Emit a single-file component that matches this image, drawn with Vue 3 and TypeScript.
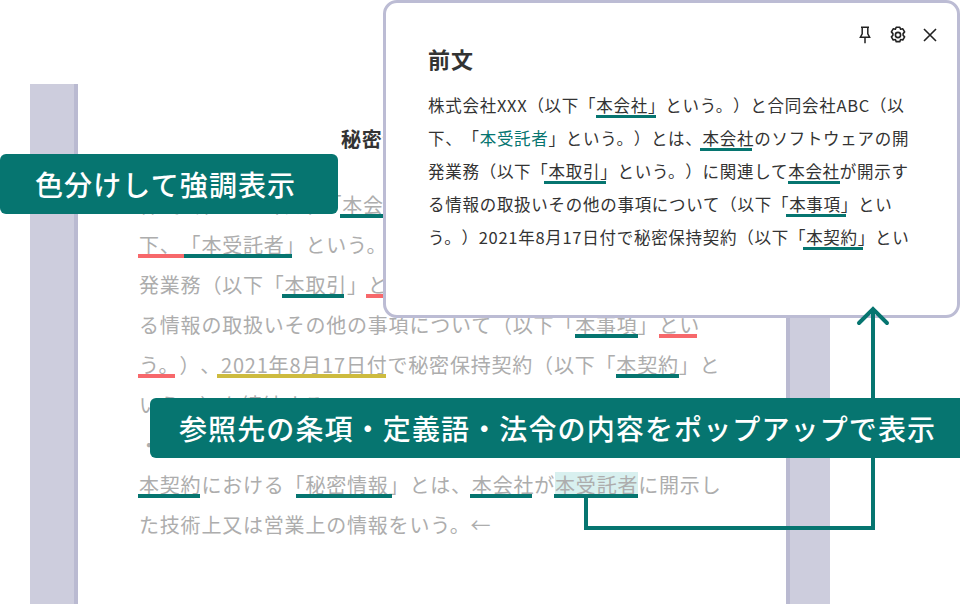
<script setup lang="ts">
type Tone = 'teal' | 'red' | 'gold'

interface Seg {
  t: string
  k?: Tone
  l?: number
  r?: number
  hl?: boolean
  term?: boolean
}

// l / r nudge each underline away from the glyph cells, the source marks aren't cell-aligned
const docLines: Seg[][] = [
  [{ t: '株式会社XXX（以下「' }, { t: '本会社', k: 'teal', l: -2 }, { t: '」という。）と合同会社ABC（以' }],
  [
    { t: '下、', k: 'red', l: -1, r: -3.4 },
    { t: '「本受託者」', k: 'teal', l: 3.4, r: 13.4 },
    { t: 'という。）とは、本会社のソフトウェアの開' }
  ],
  [
    { t: '発業務（以下「' },
    { t: '本取引', k: 'teal', l: -2.6, r: 3 },
    { t: '」' },
    { t: 'という。', k: 'red', l: -2 },
    { t: '）に関連して本会社が開示す' }
  ],
  [
    { t: 'る情報の取扱いその他の事項について（以下「' },
    { t: '本事項', k: 'teal' },
    { t: '」' },
    { t: 'とい', k: 'red', l: 1, r: 2.6 }
  ],
  [
    { t: 'う。', k: 'red', l: -1, r: 4.6 },
    { t: '）、' },
    { t: '2021年8月17日付', k: 'gold', l: -4, r: 2 },
    { t: 'で秘密保持契約（以下「' },
    { t: '本契約', k: 'teal' },
    { t: '」と' }
  ],
  [{ t: 'いう。）を締結する。←' }],
  [{ t: '・第1条（秘密情報）←' }],
  [
    { t: '本契約', k: 'teal', l: -1, r: 1.4 },
    { t: 'における' },
    { t: '「秘密情報」', k: 'teal', l: 11.4, r: 17.4 },
    { t: 'とは、' },
    { t: '本会社', k: 'teal', l: -1.8, r: 2.2 },
    { t: 'が' },
    { t: '本受託者', k: 'teal', l: -1, hl: true },
    { t: 'に開示し' }
  ],
  [{ t: 'た技術上又は営業上の情報をいう。←' }]
]

const popupLines: Seg[][] = [
  [{ t: '株式会社XXX（以下「' }, { t: '本会社」', k: 'teal', l: -0.7, r: 9.6 }, { t: 'という。）と合同会社ABC（以' }],
  [
    { t: '下、「' },
    { t: '本受託者', term: true },
    { t: '」という。）とは、' },
    { t: '本会社', k: 'teal', l: -2.5, r: 2.2 },
    { t: 'のソフトウェアの開' }
  ],
  [
    { t: '発業務（以下「' },
    { t: '本取引', k: 'teal', l: -4.5, r: -6 },
    { t: '」という。）に関連して' },
    { t: '本会社', k: 'teal' },
    { t: 'が開示す' }
  ],
  [
    { t: 'る情報の取扱いその他の事項について（以下「' },
    { t: '本事項」', k: 'teal', l: -3.6, r: 12.5 },
    { t: 'とい' }
  ],
  [
    { t: 'う。）2021年8月17日付で秘密保持契約（以下「' },
    { t: '本契約」', k: 'teal', l: -2.8, r: 11.7 },
    { t: 'とい' }
  ]
]

function segStyle(seg: Seg) {
  if (!seg.k) return undefined
  return { '--l': `${seg.l ?? 0}px`, '--r': `${seg.r ?? 0}px` }
}

function segClass(seg: Seg) {
  return [seg.k ? `mark ${seg.k}` : '', seg.hl ? 'hl' : '', seg.term ? 'term' : '']
}
</script>

<template>
  <main class="canvas">
    <section class="doc">
      <div class="paper">
        <h1 class="doc-title">秘密保持契約書←</h1>
        <p v-for="(line, i) in docLines" :key="i" class="doc-line">
          <span v-for="(seg, j) in line" :key="j" :class="segClass(seg)" :style="segStyle(seg)">{{ seg.t }}</span>
        </p>
      </div>
    </section>

    <aside class="popup">
      <div class="popup-tools">
        <svg width="12" height="18" viewBox="0 0 12 18" fill="none" stroke="#222" stroke-width="1.5">
          <path d="M2 1.2h8M3.2 1.2v6.6L1.4 11.2h9.2L8.8 7.8V1.2M6 11.2v6" />
        </svg>
        <svg width="18" height="18" viewBox="0 0 18 18" fill="none" stroke="#222" stroke-width="1.6">
          <path
            d="M7.2 1.2h3.6l.8 2.1 2.2-.5 1.8 3.1-1.5 1.7v1.6l1.5 1.7-1.8 3.1-2.2-.5-.8 2.1H7.2l-.8-2.1-2.2.5-1.8-3.1 1.5-1.7V7.6L2.4 5.9l1.8-3.1 2.2.5z"
            stroke-linejoin="round"
          />
          <circle cx="9" cy="9" r="2.6" />
        </svg>
        <svg class="tool-close" width="16" height="16" viewBox="0 0 16 16" fill="none" stroke="#222" stroke-width="1.6">
          <path d="M2 2l12 12M14 2L2 14" />
        </svg>
      </div>
      <h2 class="popup-title">前文</h2>
      <p v-for="(line, i) in popupLines" :key="i" class="popup-line">
        <span v-for="(seg, j) in line" :key="j" :class="segClass(seg)" :style="segStyle(seg)">{{ seg.t }}</span>
      </p>
    </aside>

    <svg class="connector" width="960" height="604" viewBox="0 0 960 604" fill="none">
      <path d="M586 498v30h287V310" stroke="#067570" stroke-width="4" />
      <path d="M859 323l14-14 14 14" stroke="#067570" stroke-width="4" stroke-linecap="round" />
    </svg>

    <div class="callout callout-top">色分けして強調表示</div>
    <div class="callout callout-bottom">参照先の条項・定義語・法令の内容をポップアップで表示</div>
  </main>
</template>

<style>
html,
body {
  margin: 0;
  background: #fff;
}
</style>

<style scoped>
.canvas {
  position: relative;
  width: 960px;
  height: 604px;
  overflow: hidden;
  background: #fff;
  font-family: 'Noto Sans CJK JP', 'Noto Sans', sans-serif;
  text-spacing-trim: space-all;
}

.doc {
  box-sizing: border-box;
  width: 800px;
  height: 520px;
  margin: 84px 0 0 30px;
  padding: 0 40px 0 44px;
  background: #cdcddd;
}

.paper {
  box-sizing: border-box;
  height: 100%;
  padding: 35px 0 0 61px;
  border-left: 4px solid #babad1;
  border-right: 4px solid #babad1;
  background: #fff;
}

.doc-title {
  margin: 0 0 26px;
  padding-left: 202px;
  color: #333;
  font-size: 20px;
  font-weight: 700;
  line-height: 40px;
  letter-spacing: 0.04em;
  white-space: nowrap;
}

.doc-line {
  margin: 0;
  color: #adadad;
  font-size: 20px;
  line-height: 40px;
  letter-spacing: 0.04em;
  white-space: nowrap;
}

.mark {
  position: relative;
}

.mark::after {
  content: '';
  position: absolute;
  left: var(--l, 0);
  right: var(--r, 0);
  bottom: 1.5px;
  height: 4px;
}

.teal::after {
  background: #067570;
}

.red::after {
  background: #f7686b;
}

.gold::after {
  background: #cdbb3f;
}

.hl {
  background: linear-gradient(#d8f0ef, #d8f0ef) no-repeat 0 1.5px / 100% 22px;
}

.popup {
  position: absolute;
  top: 0;
  left: 383px;
  box-sizing: border-box;
  width: 577px;
  height: 318px;
  padding: 42px 40px 0 42px;
  border: 3px solid #bcbcd4;
  border-radius: 14px;
  background: #fff;
}

.popup-tools {
  position: absolute;
  top: 23px;
  right: 19px;
  display: flex;
  align-items: center;
  gap: 18px;
}

.tool-close {
  margin-left: -3px;
}

.popup-title {
  margin: 0 0 18px;
  color: #333;
  font-size: 22px;
  font-weight: 700;
  line-height: 26px;
  letter-spacing: 0.04em;
}

.popup-line {
  margin: 0;
  color: #333;
  font-size: 16.5px;
  line-height: 33px;
  letter-spacing: 0.72px;
  white-space: nowrap;
}

.popup-line .mark::after {
  bottom: -0.5px;
  height: 3px;
}

.term {
  color: #067570;
}

.connector {
  position: absolute;
  top: 0;
  left: 0;
}

.callout {
  position: absolute;
  box-sizing: border-box;
  height: 60px;
  border-radius: 6px;
  background: #067570;
  color: #fff;
  font-size: 28px;
  font-weight: 500;
  line-height: 60px;
  white-space: nowrap;
}

.callout-top {
  top: 154px;
  left: 0;
  width: 338px;
  padding-left: 35px;
  letter-spacing: 0.04em;
}

.callout-bottom {
  top: 398px;
  left: 150px;
  width: 810px;
  padding-left: 29px;
  border-radius: 6px 0 0 6px;
  letter-spacing: 0.04em;
}
</style>
